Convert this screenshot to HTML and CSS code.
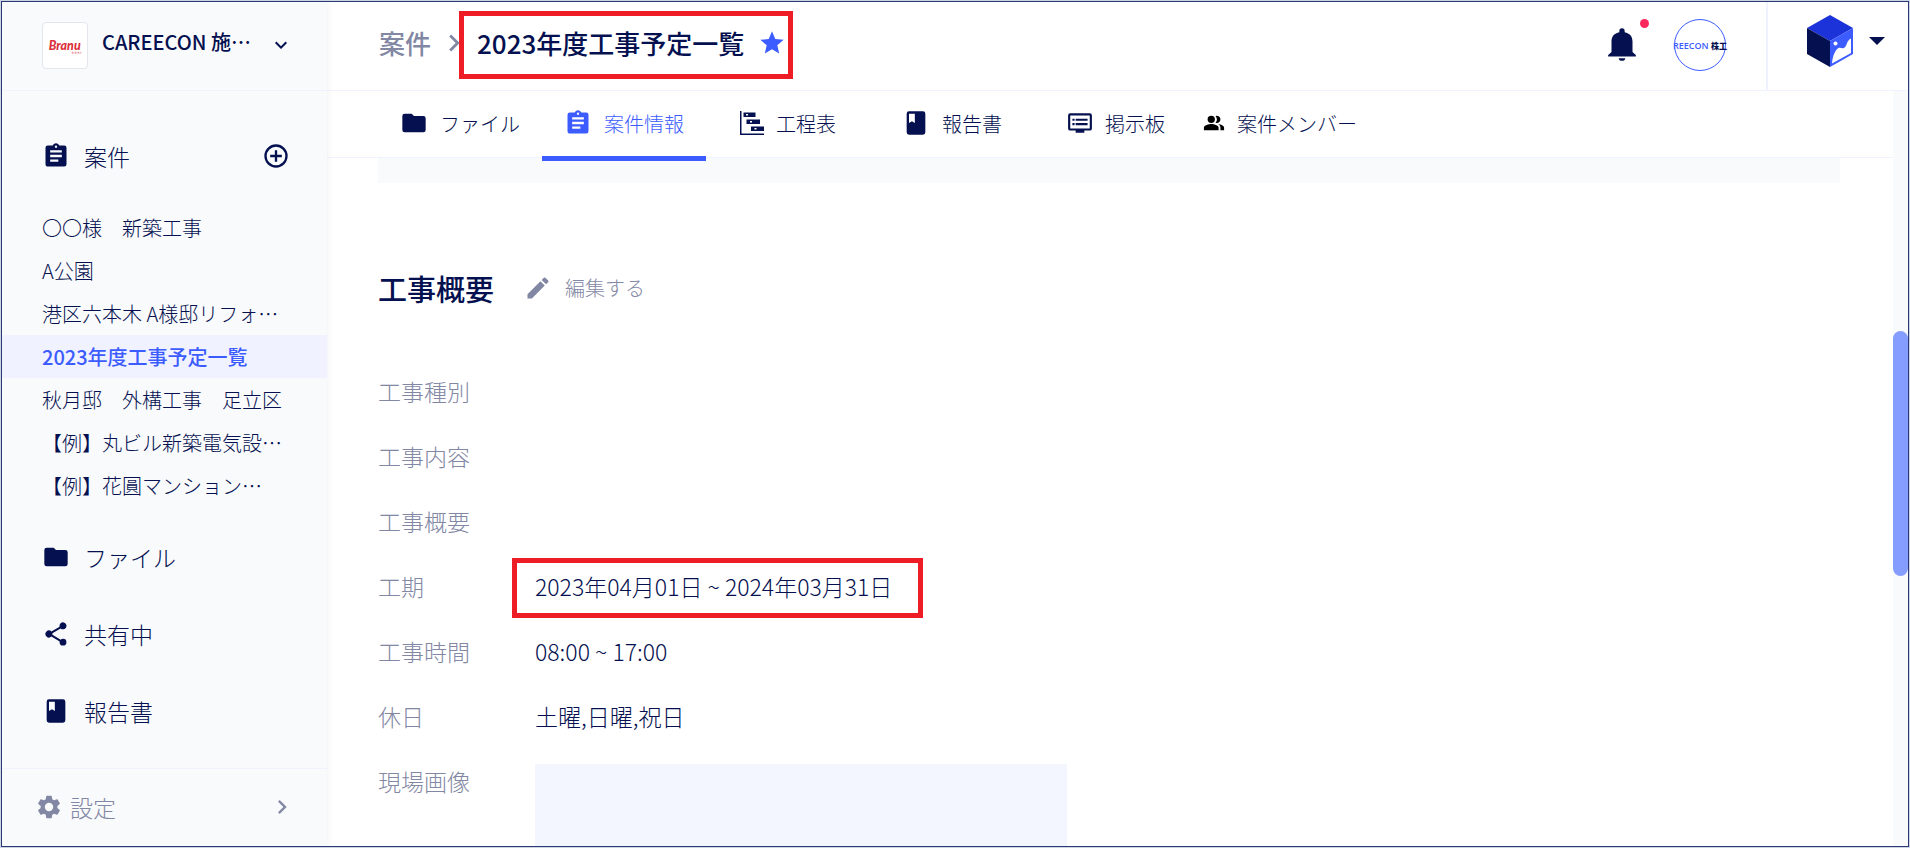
FILE: index.html
```html
<!DOCTYPE html>
<html lang="ja">
<head>
<meta charset="utf-8">
<title>2023年度工事予定一覧</title>
<link rel="stylesheet" href="styles.css">
</head>
<body>
<svg class="defs" aria-hidden="true">
  <symbol id="i-clip" viewBox="0 0 24 24"><path d="M19 3h-4.180C14.400 1.840 13.300 1 12 1s-2.400.84-2.820 2H5a2 2 0 0 0-2 2v14c0 1.100.9 2 2 2h14a2 2 0 0 0 2-2V5a2 2 0 0 0-2-2zm-7 0a1 1 0 1 1 0 2 1 1 0 0 1 0-2zm2 14H7v-2h7v2zm3-4H7v-2h10v2zm0-4H7V7h10v2z"/></symbol>
  <symbol id="i-folder" viewBox="0 0 24 24"><path d="M10 4H4a2 2 0 0 0-2 2v12a2 2 0 0 0 2 2h16a2 2 0 0 0 2-2V8a2 2 0 0 0-2-2h-8l-2-2z"/></symbol>
  <symbol id="i-book" viewBox="0 0 24 24"><path d="M18 2H6a2 2 0 0 0-2 2v16a2 2 0 0 0 2 2h12a2 2 0 0 0 2-2V4a2 2 0 0 0-2-2zM6 4h5v8l-2.500-1.500L6 12V4z"/></symbol>
  <symbol id="i-share" viewBox="0 0 24 24"><path d="M18 16.080c-.76 0-1.440.3-1.960.77L8.910 12.700a3.270 3.270 0 0 0 0-1.400l7.050-4.110A3 3 0 1 0 15 5c0 .24.040.47.090.7L8.040 9.810a3 3 0 1 0 0 4.380l7.120 4.160c-.05.21-.08.43-.08.65a2.920 2.920 0 1 0 2.920-2.920z"/></symbol>
  <symbol id="i-gear" viewBox="0 0 24 24"><path d="M19.140 12.940c.04-.3.060-.61.060-.94s-.02-.64-.07-.94l2.030-1.580a.49.490 0 0 0 .12-.61l-1.920-3.320a.49.490 0 0 0-.59-.22l-2.390.96a7 7 0 0 0-1.620-.94l-.36-2.540a.48.480 0 0 0-.48-.41h-3.840a.48.480 0 0 0-.47.410l-.36 2.540c-.59.240-1.130.57-1.620.94l-2.390-.96a.48.480 0 0 0-.59.220L2.740 8.870a.47.470 0 0 0 .12.610l2.030 1.580c-.05.3-.09.630-.09.940s.020.640.070.940l-2.030 1.580a.49.490 0 0 0-.12.610l1.920 3.320c.12.220.370.290.590.220l2.390-.96c.5.380 1.030.7 1.620.94l.36 2.540c.05.240.240.410.480.410h3.840c.24 0 .44-.17.470-.41l.36-2.540a7 7 0 0 0 1.620-.94l2.390.96c.22.080.470 0 .59-.22l1.920-3.320a.47.470 0 0 0-.12-.61l-2.010-1.580zM12 15.600a3.600 3.600 0 1 1 0-7.200 3.600 3.600 0 0 1 0 7.200z"/></symbol>
  <symbol id="i-plus" viewBox="0 0 24 24"><path d="M13 7h-2v4H7v2h4v4h2v-4h4v-2h-4V7zm-1-5a10 10 0 1 0 0 20 10 10 0 0 0 0-20zm0 18a8 8 0 1 1 0-16 8 8 0 0 1 0 16z"/></symbol>
  <symbol id="i-right" viewBox="0 0 24 24"><path d="M10 6 8.590 7.410 13.170 12l-4.580 4.590L10 18l6-6z"/></symbol>
  <symbol id="i-down" viewBox="0 0 24 24"><path d="M7.410 8.590 12 13.170l4.590-4.580L18 10l-6 6-6-6z"/></symbol>
  <symbol id="i-caret" viewBox="0 0 24 24"><path d="m4 8 8 8 8-8z"/></symbol>
  <symbol id="i-star" viewBox="0 0 24 24"><path d="M12 17.270 18.180 21l-1.640-7.030L22 9.240l-7.190-.61L12 2 9.190 8.630 2 9.240l5.460 4.730L5.820 21z"/></symbol>
  <symbol id="i-pencil" viewBox="0 0 24 24"><path d="M3 17.250V21h3.750L17.810 9.940l-3.750-3.750L3 17.250zM20.710 7.040a1 1 0 0 0 0-1.410l-2.340-2.340a1 1 0 0 0-1.410 0l-1.830 1.830 3.750 3.750 1.830-1.830z"/></symbol>
  <symbol id="i-bell" viewBox="0 0 24 24"><path d="M12 21.500c1.100 0 2-.6 2-1.600h-4c0 1 .89 1.600 2 1.600zm6.300-5.300V9.800c0-3-1.700-4.900-4.700-5.500V3.600a1.600 1.600 0 0 0-3.200 0v.7c-3 .6-4.700 2.500-4.700 5.500v6.400L3.700 18v.9h16.600V18z"/></symbol>
  <symbol id="i-board" viewBox="0 0 24 24"><path d="M21 3H3a2 2 0 0 0-2 2v12a2 2 0 0 0 2 2h5v2h8v-2h5a2 2 0 0 0 2-2V5a2 2 0 0 0-2-2zm0 14H3V5h18v12zM19 8H8v2h11V8zm0 4H8v2h11v-2zM7 8H5v2h2V8zm0 4H5v2h2v-2z"/></symbol>
  <symbol id="i-people" viewBox="0 0 24 24"><path d="M16.670 13.130C18.040 14.060 19 15.320 19 17v3h4v-3c0-2.180-3.570-3.470-6.330-3.870zM15 12a4 4 0 1 0-1.330-7.760 5.980 5.980 0 0 1 0 7.520c.42.140.860.240 1.330.240zM9 12a4 4 0 1 0 0-8 4 4 0 0 0 0 8zm0 1c-2.670 0-8 1.340-8 4v3h16v-3c0-2.660-5.330-4-8-4z"/></symbol>
  <symbol id="i-gantt" viewBox="0 0 24 24"><path fill-rule="evenodd" d="M0 0h1.500v22.500H24V24H0zM3.500 1.500h12V6h-12zM6 3v1.500h2V3zM6.500 8.500H20V13H6.500zM10 10v1.500h2V10zM11 15.500h13V20H11zM14.500 17v1.500h2V17z"/></symbol>
</svg>

<div class="app">
  <aside class="sidebar">
    <button class="company" type="button">
      <svg class="company-logo" viewBox="0 0 46 47" role="img" aria-label="Branu"><text class="logo-text" x="6" y="28">Branu</text><path d="M30 31h10" stroke="#eda0a6" stroke-width="2" stroke-dasharray="2 1"/></svg>
      <span class="company-name">CAREECON 施…</span>
      <svg class="icon-md"><use href="#i-down"/></svg>
    </button>

    <nav class="menu">
      <div class="menu-row">
        <a class="menu-link" href="#"><svg class="icon-lg"><use href="#i-clip"/></svg>案件</a>
        <button class="add" type="button" aria-label="案件を追加"><svg class="icon-lg"><use href="#i-plus"/></svg></button>
      </div>
      <ul class="projects">
        <li><a href="#">〇〇様　新築工事</a></li>
        <li><a href="#">A公園</a></li>
        <li><a href="#">港区六本木 A様邸リフォ…</a></li>
        <li><a class="current" href="#">2023年度工事予定一覧</a></li>
        <li><a href="#">秋月邸　外構工事　足立区</a></li>
        <li><a href="#">【例】丸ビル新築電気設…</a></li>
        <li><a href="#">【例】花圓マンション…</a></li>
      </ul>
      <a class="menu-link spaced" href="#"><svg class="icon-lg"><use href="#i-folder"/></svg>ファイル</a>
      <a class="menu-link spaced" href="#"><svg class="icon-lg"><use href="#i-share"/></svg>共有中</a>
      <a class="menu-link spaced" href="#"><svg class="icon-lg"><use href="#i-book"/></svg>報告書</a>
    </nav>

    <a class="settings" href="#">
      <svg class="icon-lg"><use href="#i-gear"/></svg>
      <span class="settings-label">設定</span>
      <svg class="icon-lg"><use href="#i-right"/></svg>
    </a>
  </aside>

  <div class="main">
    <header class="topbar">
      <div class="crumbs">
        <a class="crumb" href="#">案件</a>
        <svg class="crumb-sep"><use href="#i-right"/></svg>
        <div class="crumb-current marked">
          <h1>2023年度工事予定一覧</h1>
          <button class="star" type="button" aria-label="お気に入り"><svg class="icon-lg"><use href="#i-star"/></svg></button>
        </div>
      </div>
      <div class="actions">
        <button class="bell" type="button" aria-label="お知らせ"><svg class="icon-bell"><use href="#i-bell"/></svg><span class="dot"></span></button>
        <button class="avatar" type="button"><span>REECON <b>株工</b></span></button>
      </div>
      <button class="apps" type="button" aria-label="アプリ切替">
        <svg class="cube" viewBox="0 0 46 52">
          <path fill="#1c33d9" d="M23 0l23 13-23 13L0 13z"/>
          <path fill="#04104f" d="M0 13l23 13v26L0 39z"/>
          <path fill="#3d5cff" d="M46 13L23 26v26l23-13z"/>
          <path fill="#fff" d="M25 48.500c.5-7 3-13.500 6.500-15.500 2-1 3.500 1 5.500 0 3.500-2 2-7 7-9.500V38z"/>
          <circle fill="#fff" cx="28.500" cy="28.500" r="2"/>
        </svg>
        <svg class="icon-md"><use href="#i-caret"/></svg>
      </button>
    </header>

    <div class="body">
      <div class="pane">
        <nav class="tabs">
          <a class="tab" href="#"><svg class="icon-lg"><use href="#i-folder"/></svg>ファイル</a>
          <a class="tab active" href="#"><svg class="icon-lg"><use href="#i-clip"/></svg>案件情報</a>
          <a class="tab" href="#"><svg class="icon-md"><use href="#i-gantt"/></svg>工程表</a>
          <a class="tab" href="#"><svg class="icon-lg"><use href="#i-book"/></svg>報告書</a>
          <a class="tab" href="#"><svg class="icon-board"><use href="#i-board"/></svg>掲示板</a>
          <a class="tab" href="#"><svg class="icon-sm black"><use href="#i-people"/></svg>案件メンバー</a>
        </nav>
        <main class="content">
          <div class="panel-end"></div>
          <div class="section-head">
            <h2>工事概要</h2>
            <button class="edit" type="button"><svg class="icon-lg"><use href="#i-pencil"/></svg>編集する</button>
          </div>
          <dl class="details">
            <dt>工事種別</dt><dd></dd>
            <dt>工事内容</dt><dd></dd>
            <dt>工事概要</dt><dd></dd>
            <dt>工期</dt><dd><span class="marked period">2023年04月01日 ~ 2024年03月31日</span></dd>
            <dt>工事時間</dt><dd>08:00 ~ 17:00</dd>
            <dt>休日</dt><dd>土曜,日曜,祝日</dd>
            <dt>現場画像</dt><dd><div class="site-image"></div></dd>
          </dl>
        </main>
      </div>
      <div class="scroll-track"><div class="scroll-thumb"></div></div>
    </div>
  </div>
</div>
</body>
</html>
```
FILE: styles.css
```css
:root {
  --navy: #04104f;
  --blue: #3d5cff;
  --muted: #8287a4;
  --line: #f0f2ff;
  --pale: #f9fafc;
  --mark: #ee1c24;
}
* { box-sizing: border-box; }
body {
  margin: 0;
  height: 100vh;
  padding: 1px;
  background: #ccd3e2;
  color: var(--navy);
  font-family: "Noto Sans CJK JP", sans-serif;
  font-weight: 300;
  font-size: 20px;
  overflow: hidden;
}
a { color: inherit; text-decoration: none; }
button { font: inherit; color: inherit; background: none; border: 0; padding: 0; cursor: pointer; }
svg { fill: currentColor; flex: none; display: block; }
h1, h2, ul, dl, dd { margin: 0; padding: 0; }
.defs { position: absolute; width: 0; height: 0; }
.icon-sm { width: 22px; height: 22px; }
.icon-md { width: 24px; height: 24px; }
.icon-lg { width: 28px; height: 28px; }
.icon-board { width: 26px; height: 26px; }
.icon-bell { width: 40px; height: 40px; }
.black { color: #000; }

.app { display: flex; height: 100%; border: 1px solid #2b3a72; background: #fff; overflow: hidden; }

/* sidebar */
.sidebar { flex: none; width: 325px; display: flex; flex-direction: column; background: var(--pale); box-shadow: 0 0 7px rgba(4, 16, 79, .07); z-index: 1; }
.company { flex: none; display: flex; align-items: center; height: 89px; padding: 0 34px 2px 40px; border-bottom: 1px solid var(--line); text-align: left; }
.company-logo { width: 46px; height: 47px; border: 1px solid #e4e6ee; border-radius: 4px; background: #fff; }
.logo-text { font: italic 900 13px Lato, sans-serif; fill: #dc2f3c; }
.company-name { flex: 1; padding: 0 0 8px 14px; font-weight: 500; white-space: nowrap; }
.menu { flex: 1; min-height: 0; padding-top: 46px; font-size: 23px; }
.menu-row { display: flex; align-items: center; justify-content: space-between; padding-right: 37px; margin-bottom: 31px; }
.menu-link { display: flex; align-items: center; gap: 14px; padding-left: 40px; line-height: 38px; }
.menu .spaced { margin-bottom: 39px; }
.projects { list-style: none; margin-bottom: 31px; font-size: 20px; }
.projects a { display: block; padding-left: 40px; line-height: 43px; white-space: nowrap; }
.projects .current { background: #f0f2ff; color: var(--blue); font-weight: 500; }
.settings { flex: none; display: flex; align-items: center; height: 78px; padding: 0 31px 2px 33px; border-top: 1px solid var(--line); color: var(--muted); font-size: 23px; }
.settings-label { flex: 1; padding-left: 7px; }

/* top bar */
.main { flex: 1; min-width: 0; display: flex; flex-direction: column; }
.topbar { flex: none; display: flex; align-items: center; height: 89px; padding-left: 52px; border-bottom: 1px solid var(--line); }
.crumbs { flex: 1; display: flex; align-items: center; gap: 6px; padding-bottom: 7px; font-size: 26px; font-weight: 500; }
.crumb { color: var(--muted); }
.crumb-sep { width: 34px; height: 34px; color: var(--muted); }
.crumb-current { display: flex; align-items: center; gap: 14px; }
h1 { font-size: 26px; font-weight: 500; }
.star { color: var(--blue); }
.marked { position: relative; }
.marked::after { content: ""; position: absolute; border: 5px solid var(--mark); pointer-events: none; }
.crumb-current::after { inset: -13px -7px -18px -18px; }
.actions { display: flex; align-items: center; gap: 32px; padding: 0 40px 2px 0; }
.bell { position: relative; }
.dot { position: absolute; top: -6px; right: -7px; width: 9px; height: 9px; border-radius: 50%; background: #fb275d; }
.avatar { display: flex; align-items: center; justify-content: center; width: 52px; height: 52px; border: 1px solid var(--blue); border-radius: 50%; color: var(--blue); font: 600 9px "Open Sans", "Noto Sans CJK JP", sans-serif; white-space: nowrap; }
.avatar b { color: var(--navy); font-size: 8px; }
.apps { display: flex; align-items: center; gap: 12px; align-self: stretch; padding: 0 19px 10px 39px; border-left: 2px solid var(--line); }
.cube { width: 46px; height: 52px; }

/* tabs */
.body { flex: 1; min-height: 0; display: flex; }
.pane { flex: 1; min-width: 0; display: flex; flex-direction: column; }
.tabs { flex: none; display: flex; height: 67px; padding-left: 51px; border-bottom: 1px solid var(--line); }
.tab { position: relative; display: flex; align-items: center; justify-content: center; gap: 12px; min-width: 164px; padding-bottom: 2px; white-space: nowrap; }
.tab.active { color: var(--blue); }
.tab.active::after { content: ""; position: absolute; inset: auto 0 -4px; height: 5px; background: var(--blue); }

/* content */
.content { flex: 1; min-height: 0; padding: 0 53px 0 51px; overflow: hidden; }
.panel-end { height: 25px; background: var(--pale); }
.section-head { display: flex; align-items: center; gap: 30px; margin: 83px 0 64px; line-height: 44px; }
h2 { font-size: 29px; font-weight: 500; }
.edit { display: flex; align-items: center; gap: 13px; color: var(--muted); }
.details { display: grid; grid-template-columns: 157px 1fr; row-gap: 31px; line-height: 34px; font-size: 23px; }
dt { color: var(--muted); }
.period { display: inline-block; }
.period::after { inset: -11px -31px -15px -23px; }
.site-image { width: 100%; max-width: 532px; height: 300px; background: #f3f6ff; }

/* scrollbar */
.scroll-track { flex: none; width: 15px; padding-top: 240px; background: var(--pale); }
.scroll-thumb { height: 245px; border-radius: 8px; background: #859dff; }
```
